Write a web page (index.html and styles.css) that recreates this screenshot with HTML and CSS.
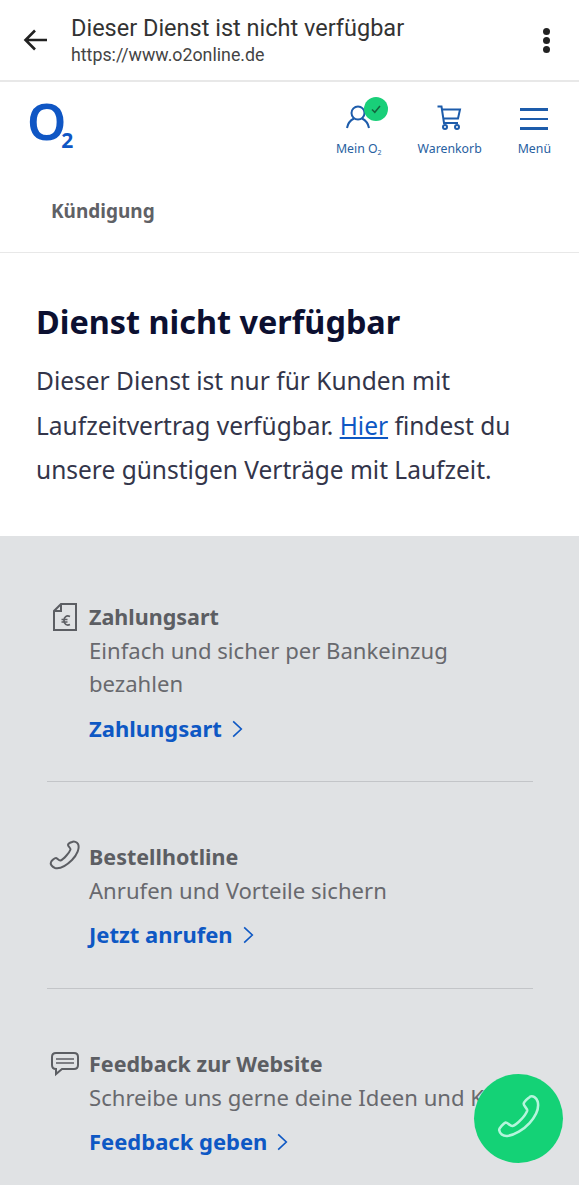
FILE: index.html
```html
<!DOCTYPE HTML>
<html lang="de">
<head>
	<meta charset="UTF-8">
	<title>Dienst nicht verfügbar</title>
	<link rel="stylesheet" href="styles.css">
</head>
<body>
	<div class="browser_bar">
		<svg class="back_icon" width="28" height="28" viewBox="0 0 28 28"><path d="M25 14H4M13 4.500L3.500 14l9.500 9.500" fill="none" stroke="#222" stroke-width="2.600"/></svg>
		<div class="browser_text">
			<div class="browser_title">Dieser Dienst ist nicht verfügbar</div>
			<div class="browser_url">https://www.o2online.de</div>
		</div>
		<div class="dots"><i></i><i></i><i></i></div>
	</div>
	<!-- browser_bar end -->

	<div class="site_head">
		<div class="logo">O<sub>2</sub></div>
		<div class="head_nav">
			<div class="nav_item nav_mein">
				<span class="nav_icon">
					<svg width="30" height="30" viewBox="0 0 30 30" fill="none" stroke="#1d5cab" stroke-width="2"><circle cx="14" cy="11" r="6.500"/><path d="M3 26c1-6 5-8.500 7-9.500M25 26c-1-6-5-8.500-7-9.500"/></svg>
					<span class="check_badge"><svg width="12" height="12" viewBox="0 0 12 12"><path d="M2 6.500l2.800 2.800L10 3" fill="none" stroke="#14663f" stroke-width="1.500"/></svg></span>
				</span>
				<span>Mein O<small>2</small></span>
			</div>
			<div class="nav_item nav_cart">
				<span class="nav_icon">
					<svg width="30" height="30" viewBox="0 0 30 30" fill="none" stroke="#1d5cab" stroke-width="2"><path d="M2.500 4.500H6.500L9 21H23M6.800 7.500H25L23 16.500H8.300"/><circle cx="10" cy="25" r="2"/><circle cx="22" cy="25" r="2"/></svg>
				</span>
				<span>Warenkorb</span>
			</div>
			<div class="nav_item nav_menu">
				<span class="nav_icon burger"><i></i><i></i><i></i></span>
				<span>Menü</span>
			</div>
		</div>
	</div>
	<!-- site_head end -->

	<div class="crumb">Kündigung</div>

	<div class="notice">
		<h1>Dienst nicht verfügbar</h1>
		<p>Dieser Dienst ist nur für Kunden mit Laufzeitvertrag verfügbar. <a href="#">Hier</a> findest du unsere günstigen Verträge mit Laufzeit.</p>
	</div>
	<!-- notice end -->

	<div class="info">
		<div class="info_item">
			<h2><svg class="info_icon icon_bill" width="26" height="30" viewBox="0 0 26 30" fill="none" stroke="#5c5e63" stroke-width="2"><path d="M9 2H24V28H2V9zM9 2V9H2"/><path d="M18 14.500c-3.500-1.500-6 .5-6 4s2.500 5.500 6 4M9.500 17.500h6M9.500 20h6" stroke-width="1.700"/></svg>Zahlungsart</h2>
			<p>Einfach und sicher per Bankeinzug bezahlen</p>
			<a href="#">Zahlungsart <svg width="13" height="20" viewBox="0 0 12 18"><path d="M2 2l7.500 7L2 16" fill="none" stroke="#0e58c4" stroke-width="1.500"/></svg></a>
		</div>
		<div class="info_item">
			<h2><svg class="info_icon icon_phone" width="34" height="36" viewBox="0 0 34 36" fill="none" stroke="#5c5e63" stroke-width="2"><path d="M24 3c2-1 5 0 6 2 2 4-1 11-6 16s-12 9-17 8c-3-1-5-4-4-6 .5-1.500 3.500-4 5-4 1 0 3 3 4.500 2.500 3-1 9-8 10-11 .5-1.500-2.500-3-2.500-4.500 0-1 2.500-2.500 4-3z"/></svg>Bestellhotline</h2>
			<p>Anrufen und Vorteile sichern</p>
			<a href="#">Jetzt anrufen <svg width="13" height="20" viewBox="0 0 12 18"><path d="M2 2l7.500 7L2 16" fill="none" stroke="#0e58c4" stroke-width="1.500"/></svg></a>
		</div>
		<div class="info_item">
			<h2><svg class="info_icon" width="30" height="26" viewBox="0 0 30 26" fill="none" stroke="#5c5e63" stroke-width="2"><path d="M6 2H24c2.500 0 4 1.500 4 4v8c0 2.500-1.500 4-4 4H12l-6 5v-5c-2.500 0-4-1.500-4-4V6c0-2.500 1.500-4 4-4z"/><path d="M6 8H24M6 12H24" stroke-width="1.400"/></svg>Feedback zur Website</h2>
			<p class="nowrap">Schreibe uns gerne deine Ideen und Kritik</p>
			<a href="#">Feedback geben <svg width="13" height="20" viewBox="0 0 12 18"><path d="M2 2l7.500 7L2 16" fill="none" stroke="#0e58c4" stroke-width="1.500"/></svg></a>
		</div>
	</div>
	<!-- info end -->

	<div class="call_btn">
		<svg width="56" height="56" viewBox="0 0 48 48" fill="none" stroke="#b5f5dc" stroke-width="2.200"><path d="M33 5c3-1.500 6 1 7 4 1.500 6-2 13-7 18.500S20 38 14 38.500c-4 .3-6.500-2-7-5-.3-1.500 4-6 5.500-6.500 1.500-.3 4 3.500 6 3 4-1 11-9 12.500-13 .5-2-3-4-3-6 0-1.500 3.500-5 5.500-6z"/></svg>
	</div>
</body>
</html>
```

FILE: styles.css
```css
html, body {
	margin:0;
	height:1185px;
	overflow:hidden;
}
body {
	position:relative;
	background:#fff;
	font-family:"Noto Sans", sans-serif;
}

.browser_bar {
	display:flex;
	align-items:center;
	height:80px;
	padding:0 29px 0 22px;
	border-bottom:2px solid #e8e8e8;
	font-family:Roboto, sans-serif;
}
.back_icon {
	flex:none;
	margin-right:21px;
}
.browser_text {
	flex:1;
}
.browser_title {
	font-size:23.500px;
	line-height:30px;
	color:#333;
}
.browser_url {
	font-size:17.800px;
	line-height:24px;
	color:#444;
}
.dots i {
	display:block;
	width:7px;
	height:7px;
	margin:2px 0;
	border-radius:50%;
	background:#222;
}

.site_head {
	display:flex;
	justify-content:space-between;
	height:94px;
}
.logo {
	margin:11px 0 0 27px;
	font-size:50px;
	line-height:56px;
	font-weight:600;
	color:#0f56c4;
}
.logo sub {
	font-size:21px;
	font-weight:700;
	line-height:0;
	margin-left:-5px;
	vertical-align:-8px;
}
.head_nav {
	display:flex;
	padding-right:28px;
}
.nav_item {
	display:flex;
	flex-direction:column;
	align-items:center;
	margin-left:36px;
	padding-top:20px;
	font-size:12.300px;
	line-height:18px;
	color:#27609f;
}
.nav_item small {
	font-size:7px;
	vertical-align:-2px;
}
.nav_icon {
	position:relative;
	display:block;
	width:30px;
	height:30px;
	margin-bottom:8px;
}
.check_badge {
	position:absolute;
	top:-5px;
	left:20px;
	display:flex;
	align-items:center;
	justify-content:center;
	width:24px;
	height:24px;
	border-radius:50%;
	background:#19cf79;
}
.burger i {
	display:block;
	height:2.500px;
	margin:6px 1px 7px;
	background:#1d5cab;
}

.crumb {
	height:76px;
	padding-left:51px;
	border-bottom:1px solid #e8e8e8;
	font-size:19px;
	line-height:70px;
	font-weight:700;
	color:#5f6166;
}

.notice {
	height:283px;
	padding:0 36px;
}
.notice h1 {
	margin:0;
	padding-top:46px;
	font-size:32.400px;
	line-height:44px;
	font-weight:700;
	color:#0c1031;
}
.notice p {
	margin:16px 0 0;
	font-size:24.500px;
	line-height:44.500px;
	color:#33354a;
}
.notice a {
	color:#0e58c4;
}

.info {
	height:649px;
	padding:0 46px 0 47px;
	background:#e0e2e4;
}
.info_item {
	padding:64px 0 36px 42px;
	border-bottom:1px solid #c3c5c8;
}
.info_item + .info_item {
	padding-top:58px;
	padding-bottom:37px;
}
.info_item:last-child {
	border-bottom:0;
}
.info_item h2 {
	position:relative;
	margin:0 0 1px;
	font-size:21.500px;
	line-height:33px;
	font-weight:700;
	color:#5c5e63;
}
.info_icon {
	position:absolute;
	left:-39px;
	top:50%;
	transform:translateY(-50%);
}
.info_icon.icon_bill {
	left:-37px;
}
.info_icon.icon_phone {
	left:-41px;
}
.info_item p {
	margin:0;
	font-size:22.100px;
	line-height:33px;
	color:#68696e;
}
.info_item p.nowrap {
	white-space:nowrap;
}
.info_item a {
	display:inline-flex;
	align-items:center;
	gap:9px;
	margin-top:12px;
	font-size:22px;
	line-height:33px;
	font-weight:700;
	color:#0e58c4;
	text-decoration:none;
}
.info_item + .info_item a {
	margin-top:11px;
}

.call_btn {
	position:absolute;
	left:474px;
	top:1074px;
	display:flex;
	align-items:center;
	justify-content:center;
	width:89px;
	height:89px;
	border-radius:50%;
	background:#14d276;
}
```
